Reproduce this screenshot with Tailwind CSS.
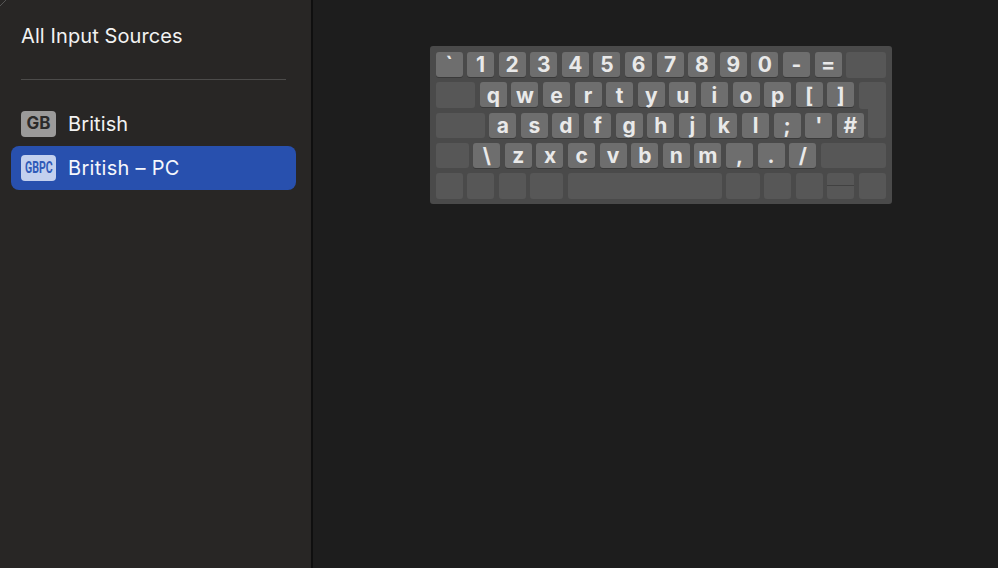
<!DOCTYPE html>
<html lang="en">
<head>
  <meta charset="UTF-8" />
  <title>All Input Sources</title>
  <script src="https://cdn.jsdelivr.net/npm/@tailwindcss/browser@4"></script>
</head>
<body class="bg-[#1d1d1d] overflow-hidden font-['Inter','Liberation_Sans',sans-serif]">
  <div class="relative flex w-[998px] h-[568px]">
    <!-- window corner -->
    <svg class="absolute left-0 top-0" width="8" height="8" viewBox="0 0 8 8" fill="none"><path d="M0 6 L6 0" stroke="#555" stroke-width="1"/></svg>

    <!-- sidebar -->
    <aside class="w-[313px] h-full shrink-0 bg-[#282625] border-r-[2px] border-[#0f0f0f] pt-[24px] pl-[11px] pr-[15px]">
      <h1 class="pl-[10px] text-[20px] leading-[25px] text-[#f2f2f2] tracking-[0.1px]">All Input Sources</h1>
      <div class="mx-[10px] mt-[30px] h-[1px] bg-[#4c4b4a]"></div>
      <div class="mt-[22px] h-[44px] flex items-center pl-[10px] gap-[12px]">
        <span class="w-[35px] h-[26px] rounded-[4px] bg-[#9b9a9a] text-[#2b2a2a] text-[17px] font-bold flex items-center justify-center">GB</span>
        <span class="text-[20px] text-[#f2f2f2] tracking-[0.1px]">British</span>
      </div>
      <div class="h-[44px] rounded-[8px] bg-[#2850ae] flex items-center pl-[10px] gap-[12px]">
        <span class="w-[35px] h-[26px] rounded-[4px] bg-[#c3d0ee] text-[#2f5ab8] text-[16px] font-bold flex items-center justify-center font-['Roboto',sans-serif]"><span class="inline-block scale-x-[0.66]">GBPC</span></span>
        <span class="text-[20px] text-[#f5f7fc] tracking-[0.3px]">British – PC</span>
      </div>
    </aside>

    <!-- keyboard preview -->
    <main class="flex-1 pt-[46px] pl-[117px]">
      <div class="w-[462px] h-[158px] rounded-[3px] bg-[#4a4a4a] pt-[6px] pl-[5.5px] flex flex-col gap-[5.3px] text-[#e9e9e9] text-[21px] font-bold">
        <div class="flex gap-[4.6px] h-[25px]">
          <span class="w-[27px] h-[25px] pt-[1px] rounded-[3px] bg-[#6e6e6e] shadow-[0_1px_0_#3a3a3a] flex items-center justify-center">`</span>
          <span class="w-[27px] h-[25px] pt-[1px] rounded-[3px] bg-[#6e6e6e] shadow-[0_1px_0_#3a3a3a] flex items-center justify-center">1</span>
          <span class="w-[27px] h-[25px] pt-[1px] rounded-[3px] bg-[#6e6e6e] shadow-[0_1px_0_#3a3a3a] flex items-center justify-center">2</span>
          <span class="w-[27px] h-[25px] pt-[1px] rounded-[3px] bg-[#6e6e6e] shadow-[0_1px_0_#3a3a3a] flex items-center justify-center">3</span>
          <span class="w-[27px] h-[25px] pt-[1px] rounded-[3px] bg-[#6e6e6e] shadow-[0_1px_0_#3a3a3a] flex items-center justify-center">4</span>
          <span class="w-[27px] h-[25px] pt-[1px] rounded-[3px] bg-[#6e6e6e] shadow-[0_1px_0_#3a3a3a] flex items-center justify-center">5</span>
          <span class="w-[27px] h-[25px] pt-[1px] rounded-[3px] bg-[#6e6e6e] shadow-[0_1px_0_#3a3a3a] flex items-center justify-center">6</span>
          <span class="w-[27px] h-[25px] pt-[1px] rounded-[3px] bg-[#6e6e6e] shadow-[0_1px_0_#3a3a3a] flex items-center justify-center">7</span>
          <span class="w-[27px] h-[25px] pt-[1px] rounded-[3px] bg-[#6e6e6e] shadow-[0_1px_0_#3a3a3a] flex items-center justify-center">8</span>
          <span class="w-[27px] h-[25px] pt-[1px] rounded-[3px] bg-[#6e6e6e] shadow-[0_1px_0_#3a3a3a] flex items-center justify-center">9</span>
          <span class="w-[27px] h-[25px] pt-[1px] rounded-[3px] bg-[#6e6e6e] shadow-[0_1px_0_#3a3a3a] flex items-center justify-center">0</span>
          <span class="w-[27px] h-[25px] pt-[1px] rounded-[3px] bg-[#6e6e6e] shadow-[0_1px_0_#3a3a3a] flex items-center justify-center">-</span>
          <span class="w-[27px] h-[25px] pt-[1px] rounded-[3px] bg-[#6e6e6e] shadow-[0_1px_0_#3a3a3a] flex items-center justify-center">=</span>
          <span class="w-[40px] h-[25.5px] rounded-[3px] bg-[#575757]"></span>
        </div>
        <div class="flex gap-[4.6px] h-[25px]">
          <span class="w-[39.7px] h-[25.5px] rounded-[3px] bg-[#575757]"></span>
          <span class="w-[27px] h-[25px] pt-[1px] rounded-[3px] bg-[#6e6e6e] shadow-[0_1px_0_#3a3a3a] flex items-center justify-center">q</span>
          <span class="w-[27px] h-[25px] pt-[1px] rounded-[3px] bg-[#6e6e6e] shadow-[0_1px_0_#3a3a3a] flex items-center justify-center">w</span>
          <span class="w-[27px] h-[25px] pt-[1px] rounded-[3px] bg-[#6e6e6e] shadow-[0_1px_0_#3a3a3a] flex items-center justify-center">e</span>
          <span class="w-[27px] h-[25px] pt-[1px] rounded-[3px] bg-[#6e6e6e] shadow-[0_1px_0_#3a3a3a] flex items-center justify-center">r</span>
          <span class="w-[27px] h-[25px] pt-[1px] rounded-[3px] bg-[#6e6e6e] shadow-[0_1px_0_#3a3a3a] flex items-center justify-center">t</span>
          <span class="w-[27px] h-[25px] pt-[1px] rounded-[3px] bg-[#6e6e6e] shadow-[0_1px_0_#3a3a3a] flex items-center justify-center">y</span>
          <span class="w-[27px] h-[25px] pt-[1px] rounded-[3px] bg-[#6e6e6e] shadow-[0_1px_0_#3a3a3a] flex items-center justify-center">u</span>
          <span class="w-[27px] h-[25px] pt-[1px] rounded-[3px] bg-[#6e6e6e] shadow-[0_1px_0_#3a3a3a] flex items-center justify-center">i</span>
          <span class="w-[27px] h-[25px] pt-[1px] rounded-[3px] bg-[#6e6e6e] shadow-[0_1px_0_#3a3a3a] flex items-center justify-center">o</span>
          <span class="w-[27px] h-[25px] pt-[1px] rounded-[3px] bg-[#6e6e6e] shadow-[0_1px_0_#3a3a3a] flex items-center justify-center">p</span>
          <span class="w-[27px] h-[25px] pt-[1px] rounded-[3px] bg-[#6e6e6e] shadow-[0_1px_0_#3a3a3a] flex items-center justify-center">[</span>
          <span class="w-[27px] h-[25px] pt-[1px] rounded-[3px] bg-[#6e6e6e] shadow-[0_1px_0_#3a3a3a] flex items-center justify-center">]</span>
          <span class="w-[27px] h-[27px] rounded-t-[3px] rounded-bl-[3px] bg-[#575757]"></span>
        </div>
        <div class="flex gap-[4.6px] h-[25px]">
          <span class="w-[49.2px] h-[25.5px] rounded-[3px] bg-[#575757]"></span>
          <span class="w-[27px] h-[25px] pt-[1px] rounded-[3px] bg-[#6e6e6e] shadow-[0_1px_0_#3a3a3a] flex items-center justify-center">a</span>
          <span class="w-[27px] h-[25px] pt-[1px] rounded-[3px] bg-[#6e6e6e] shadow-[0_1px_0_#3a3a3a] flex items-center justify-center">s</span>
          <span class="w-[27px] h-[25px] pt-[1px] rounded-[3px] bg-[#6e6e6e] shadow-[0_1px_0_#3a3a3a] flex items-center justify-center">d</span>
          <span class="w-[27px] h-[25px] pt-[1px] rounded-[3px] bg-[#6e6e6e] shadow-[0_1px_0_#3a3a3a] flex items-center justify-center">f</span>
          <span class="w-[27px] h-[25px] pt-[1px] rounded-[3px] bg-[#6e6e6e] shadow-[0_1px_0_#3a3a3a] flex items-center justify-center">g</span>
          <span class="w-[27px] h-[25px] pt-[1px] rounded-[3px] bg-[#6e6e6e] shadow-[0_1px_0_#3a3a3a] flex items-center justify-center">h</span>
          <span class="w-[27px] h-[25px] pt-[1px] rounded-[3px] bg-[#6e6e6e] shadow-[0_1px_0_#3a3a3a] flex items-center justify-center">j</span>
          <span class="w-[27px] h-[25px] pt-[1px] rounded-[3px] bg-[#6e6e6e] shadow-[0_1px_0_#3a3a3a] flex items-center justify-center">k</span>
          <span class="w-[27px] h-[25px] pt-[1px] rounded-[3px] bg-[#6e6e6e] shadow-[0_1px_0_#3a3a3a] flex items-center justify-center">l</span>
          <span class="w-[27px] h-[25px] pt-[1px] rounded-[3px] bg-[#6e6e6e] shadow-[0_1px_0_#3a3a3a] flex items-center justify-center">;</span>
          <span class="w-[27px] h-[25px] pt-[1px] rounded-[3px] bg-[#6e6e6e] shadow-[0_1px_0_#3a3a3a] flex items-center justify-center">'</span>
          <span class="w-[27px] h-[25px] pt-[1px] rounded-[3px] bg-[#6e6e6e] shadow-[0_1px_0_#3a3a3a] flex items-center justify-center">#</span>
          <span class="w-[18px] h-[30px] -mt-[5px] rounded-b-[3px] bg-[#575757]"></span>
        </div>
        <div class="flex gap-[4.6px] h-[25px]">
          <span class="w-[33.2px] h-[25.5px] rounded-[3px] bg-[#575757]"></span>
          <span class="w-[27px] h-[25px] pt-[1px] rounded-[3px] bg-[#6e6e6e] shadow-[0_1px_0_#3a3a3a] flex items-center justify-center">\</span>
          <span class="w-[27px] h-[25px] pt-[1px] rounded-[3px] bg-[#6e6e6e] shadow-[0_1px_0_#3a3a3a] flex items-center justify-center">z</span>
          <span class="w-[27px] h-[25px] pt-[1px] rounded-[3px] bg-[#6e6e6e] shadow-[0_1px_0_#3a3a3a] flex items-center justify-center">x</span>
          <span class="w-[27px] h-[25px] pt-[1px] rounded-[3px] bg-[#6e6e6e] shadow-[0_1px_0_#3a3a3a] flex items-center justify-center">c</span>
          <span class="w-[27px] h-[25px] pt-[1px] rounded-[3px] bg-[#6e6e6e] shadow-[0_1px_0_#3a3a3a] flex items-center justify-center">v</span>
          <span class="w-[27px] h-[25px] pt-[1px] rounded-[3px] bg-[#6e6e6e] shadow-[0_1px_0_#3a3a3a] flex items-center justify-center">b</span>
          <span class="w-[27px] h-[25px] pt-[1px] rounded-[3px] bg-[#6e6e6e] shadow-[0_1px_0_#3a3a3a] flex items-center justify-center">n</span>
          <span class="w-[27px] h-[25px] pt-[1px] rounded-[3px] bg-[#6e6e6e] shadow-[0_1px_0_#3a3a3a] flex items-center justify-center">m</span>
          <span class="w-[27px] h-[25px] pt-[1px] rounded-[3px] bg-[#6e6e6e] shadow-[0_1px_0_#3a3a3a] flex items-center justify-center">,</span>
          <span class="w-[27px] h-[25px] pt-[1px] rounded-[3px] bg-[#6e6e6e] shadow-[0_1px_0_#3a3a3a] flex items-center justify-center">.</span>
          <span class="w-[27px] h-[25px] pt-[1px] rounded-[3px] bg-[#6e6e6e] shadow-[0_1px_0_#3a3a3a] flex items-center justify-center">/</span>
          <span class="w-[65.5px] h-[25.5px] rounded-[3px] bg-[#575757]"></span>
        </div>
        <div class="flex gap-[4.6px] h-[25px]">
          <span class="w-[27px] h-[25.5px] rounded-[3px] bg-[#575757]"></span>
          <span class="w-[27px] h-[25.5px] rounded-[3px] bg-[#575757]"></span>
          <span class="w-[27px] h-[25.5px] rounded-[3px] bg-[#575757]"></span>
          <span class="w-[33.2px] h-[25.5px] rounded-[3px] bg-[#575757]"></span>
          <span class="w-[153.6px] h-[25.5px] rounded-[3px] bg-[#575757]"></span>
          <span class="w-[33.4px] h-[25.5px] rounded-[3px] bg-[#575757]"></span>
          <span class="w-[27px] h-[25.5px] rounded-[3px] bg-[#575757]"></span>
          <span class="w-[27px] h-[25.5px] rounded-[3px] bg-[#575757]"></span>
          <span class="w-[27px] h-[25.5px] flex flex-col">
            <span class="h-[12px] rounded-t-[3px] bg-[#575757]"></span>
            <span class="h-[1px] bg-[#414141]"></span>
            <span class="h-[12.5px] rounded-b-[3px] bg-[#575757]"></span>
          </span>
          <span class="w-[27px] h-[25.5px] rounded-[3px] bg-[#575757]"></span>
        </div>
      </div>
    </main>
  </div>
</body>
</html>
